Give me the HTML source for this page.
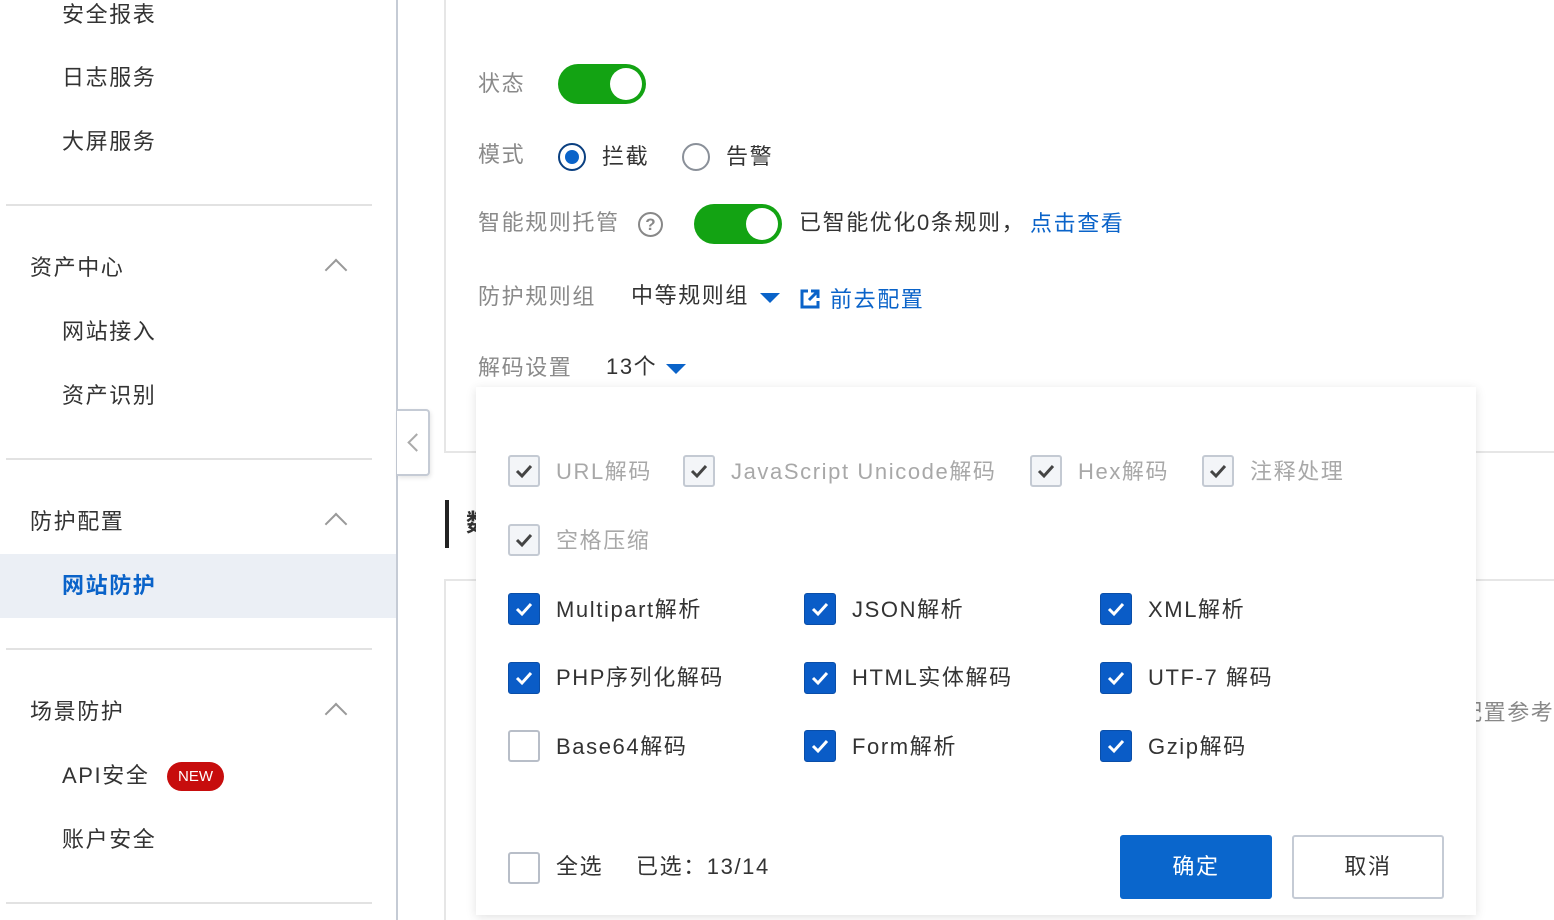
<!DOCTYPE html>
<html style="overflow:hidden;width:1554px;height:920px"><head><meta charset="utf-8"><style>
*{margin:0;padding:0;box-sizing:border-box}
body{width:1554px;height:920px;overflow:hidden;background:#fff;position:relative;font-family:"Liberation Sans","Noto Sans CJK SC",sans-serif;color:#333;font-size:22px;letter-spacing:1.6px}
.a{position:absolute;white-space:nowrap;line-height:30px}
.lbl{color:#8a8a8a}
.div{position:absolute;left:6px;width:366px;height:2px;background:#e2e2e2}
.chev{position:absolute;width:16px;height:16px;border-left:2px solid #999;border-top:2px solid #999;transform:rotate(45deg)}
.cb{position:absolute;width:32px;height:32px;border-radius:3px}
.cb.on{background:#0a5cc7;border:1px solid #0a4ea8}
.cb.dis{background:#f3f5f8;border:2px solid #c4cad3}
.cb.off{background:#fff;border:2px solid #b8bec8}
.cb svg{position:absolute;left:50%;top:50%;transform:translate(-50%,-50%)}
.tog{position:absolute;width:88px;height:40px;border-radius:20px;background:#13a313}
.tog::after{content:"";position:absolute;right:4px;top:4px;width:32px;height:32px;border-radius:50%;background:#fff}
.tri{position:absolute;width:0;height:0;border-left:10px solid transparent;border-right:10px solid transparent;border-top:10px solid #0a63c9}
</style></head><body>
<div style="position:absolute;left:396px;top:0;width:2px;height:920px;background:#c5cbd5"></div>
<div class="a" style="left:62px;top:0">安全报表</div>
<div class="a" style="left:62px;top:63px">日志服务</div>
<div class="a" style="left:62px;top:127px">大屏服务</div>
<div class="div" style="top:204px"></div>
<div class="a" style="left:30px;top:253px">资产中心</div>
<div class="chev" style="left:328px;top:262px"></div>
<div class="a" style="left:62px;top:317px">网站接入</div>
<div class="a" style="left:62px;top:381px">资产识别</div>
<div class="div" style="top:458px"></div>
<div class="a" style="left:30px;top:507px">防护配置</div>
<div class="chev" style="left:328px;top:516px"></div>
<div style="position:absolute;left:0;top:554px;width:396px;height:64px;background:#ebeff5"></div>
<div class="a" style="left:62px;top:571px;color:#0a63c9;font-weight:bold">网站防护</div>
<div class="div" style="top:648px"></div>
<div class="a" style="left:30px;top:697px">场景防护</div>
<div class="chev" style="left:328px;top:706px"></div>
<div class="a" style="left:62px;top:761px">API安全</div>
<div style="position:absolute;left:167px;top:762px;width:57px;height:29px;border-radius:15px;background:#c70d0d;color:#fff;font-size:15px;line-height:29px;text-align:center;letter-spacing:0">NEW</div>
<div class="a" style="left:62px;top:825px">账户安全</div>
<div class="div" style="top:902px"></div>
<div style="position:absolute;left:397px;top:409px;width:33px;height:67px;background:#fff;border:2px solid #c5cbd5;border-left:none;border-radius:0 4px 4px 0;box-shadow:1px 2px 4px rgba(0,0,0,.1)"></div>
<div style="position:absolute;left:410px;top:436px;width:13px;height:13px;border-left:2px solid #aaa;border-bottom:2px solid #aaa;transform:rotate(45deg)"></div>
<div style="position:absolute;left:444px;top:-2px;width:1200px;height:455px;border:2px solid #e6e6e6"></div>
<div style="position:absolute;left:444px;top:579px;width:1200px;height:341px;border:2px solid #e6e6e6;border-bottom:none"></div>
<div style="position:absolute;left:445px;top:500px;width:4px;height:48px;background:#222"></div>
<div class="a" style="left:466px;top:509px;font-weight:bold;font-size:24px">数据</div>
<div class="a" style="left:1460px;top:698px;color:#888">配置参考</div>
<div class="a lbl" style="left:478px;top:69px">状态</div>
<div class="tog" style="left:558px;top:64px"></div>
<div class="a lbl" style="left:478px;top:140px">模式</div>
<div style="position:absolute;left:558px;top:143px;width:28px;height:28px;border-radius:50%;border:2px solid #0a3f80;background:#fff"><div style="position:absolute;left:5px;top:5px;width:14px;height:14px;border-radius:50%;background:#0a63c9"></div></div>
<div class="a" style="left:602px;top:142px">拦截</div>
<div style="position:absolute;left:682px;top:143px;width:28px;height:28px;border-radius:50%;border:2px solid #8a9099;background:#fff"></div>
<div class="a" style="left:726px;top:142px">告警</div>
<div class="a lbl" style="left:478px;top:208px">智能规则托管</div>
<div style="position:absolute;left:638px;top:212px;width:25px;height:25px;border-radius:50%;border:2px solid #888;color:#888;font-size:17px;line-height:21px;text-align:center;font-weight:bold;letter-spacing:0">?</div>
<div class="tog" style="left:694px;top:204px"></div>
<div class="a" style="left:799px;top:208px">已智能优化0条规则，</div>
<div class="a" style="left:1030px;top:209px;color:#0a63c9">点击查看</div>
<div class="a lbl" style="left:478px;top:282px">防护规则组</div>
<div class="a" style="left:631px;top:281px">中等规则组</div>
<div class="tri" style="left:760px;top:293px"></div>
<svg style="position:absolute;left:799px;top:288px" width="22" height="22" viewBox="0 0 22 22" fill="none" stroke="#0a63c9" stroke-width="3"><path d="M9 3H3v16h16v-6"/><path d="M10 12L19 3M12 3h7v7"/></svg>
<div class="a" style="left:830px;top:285px;color:#0a63c9">前去配置</div>
<div class="a lbl" style="left:478px;top:353px">解码设置</div>
<div class="a" style="left:606px;top:352px">13个</div>
<div class="tri" style="left:666px;top:364px"></div>
<div style="position:absolute;left:476px;top:387px;width:1000px;height:528px;background:#fff;box-shadow:0 2px 10px rgba(0,0,0,.12)"></div>
<svg width="0" height="0" style="position:absolute"><defs><path id="ck" d="M3 9l5 5 9-10"/></defs></svg>
<div style="color:#a8a8a8">
<div class="cb dis" style="left:508px;top:455px"><svg width="20" height="18" viewBox="0 0 20 18"><use href="#ck" fill="none" stroke="#444" stroke-width="3"/></svg></div>
<div class="a" style="left:556px;top:457px">URL解码</div>
<div class="cb dis" style="left:683px;top:455px"><svg width="20" height="18" viewBox="0 0 20 18"><use href="#ck" fill="none" stroke="#444" stroke-width="3"/></svg></div>
<div class="a" style="left:731px;top:457px">JavaScript Unicode解码</div>
<div class="cb dis" style="left:1030px;top:455px"><svg width="20" height="18" viewBox="0 0 20 18"><use href="#ck" fill="none" stroke="#444" stroke-width="3"/></svg></div>
<div class="a" style="left:1078px;top:457px">Hex解码</div>
<div class="cb dis" style="left:1202px;top:455px"><svg width="20" height="18" viewBox="0 0 20 18"><use href="#ck" fill="none" stroke="#444" stroke-width="3"/></svg></div>
<div class="a" style="left:1250px;top:457px">注释处理</div>
<div class="cb dis" style="left:508px;top:524px"><svg width="20" height="18" viewBox="0 0 20 18"><use href="#ck" fill="none" stroke="#444" stroke-width="3"/></svg></div>
<div class="a" style="left:556px;top:526px">空格压缩</div>
</div>
<div class="cb on" style="left:508px;top:593px"><svg width="20" height="18" viewBox="0 0 20 18"><use href="#ck" fill="none" stroke="#fff" stroke-width="3"/></svg></div>
<div class="a" style="left:556px;top:595px">Multipart解析</div>
<div class="cb on" style="left:804px;top:593px"><svg width="20" height="18" viewBox="0 0 20 18"><use href="#ck" fill="none" stroke="#fff" stroke-width="3"/></svg></div>
<div class="a" style="left:852px;top:595px">JSON解析</div>
<div class="cb on" style="left:1100px;top:593px"><svg width="20" height="18" viewBox="0 0 20 18"><use href="#ck" fill="none" stroke="#fff" stroke-width="3"/></svg></div>
<div class="a" style="left:1148px;top:595px">XML解析</div>
<div class="cb on" style="left:508px;top:662px"><svg width="20" height="18" viewBox="0 0 20 18"><use href="#ck" fill="none" stroke="#fff" stroke-width="3"/></svg></div>
<div class="a" style="left:556px;top:663px">PHP序列化解码</div>
<div class="cb on" style="left:804px;top:662px"><svg width="20" height="18" viewBox="0 0 20 18"><use href="#ck" fill="none" stroke="#fff" stroke-width="3"/></svg></div>
<div class="a" style="left:852px;top:663px">HTML实体解码</div>
<div class="cb on" style="left:1100px;top:662px"><svg width="20" height="18" viewBox="0 0 20 18"><use href="#ck" fill="none" stroke="#fff" stroke-width="3"/></svg></div>
<div class="a" style="left:1148px;top:663px">UTF-7 解码</div>
<div class="cb off" style="left:508px;top:730px"></div>
<div class="a" style="left:556px;top:732px">Base64解码</div>
<div class="cb on" style="left:804px;top:730px"><svg width="20" height="18" viewBox="0 0 20 18"><use href="#ck" fill="none" stroke="#fff" stroke-width="3"/></svg></div>
<div class="a" style="left:852px;top:732px">Form解析</div>
<div class="cb on" style="left:1100px;top:730px"><svg width="20" height="18" viewBox="0 0 20 18"><use href="#ck" fill="none" stroke="#fff" stroke-width="3"/></svg></div>
<div class="a" style="left:1148px;top:732px">Gzip解码</div>
<div class="cb off" style="left:508px;top:852px"></div>
<div class="a" style="left:556px;top:852px">全选</div>
<div class="a" style="left:636px;top:852px">已选：13/14</div>
<div style="position:absolute;left:1120px;top:835px;width:152px;height:64px;background:#0a66cc;border-radius:3px;color:#fff;text-align:center;line-height:64px">确定</div>
<div style="position:absolute;left:1292px;top:835px;width:152px;height:64px;background:#fff;border:2px solid #c5cbd5;border-radius:3px;text-align:center;line-height:60px">取消</div>
</body></html>
